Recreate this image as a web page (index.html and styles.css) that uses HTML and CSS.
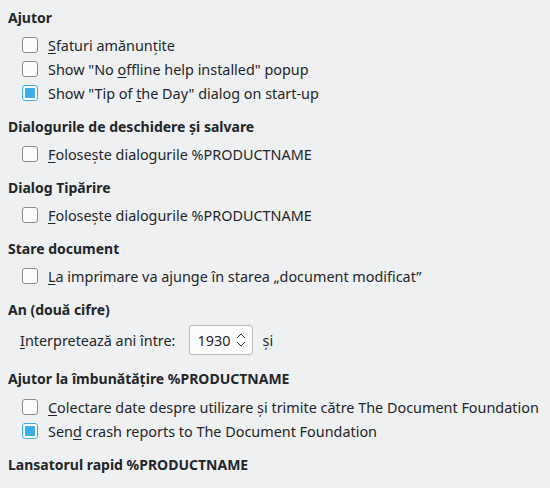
FILE: index.html
```html
<!DOCTYPE html>
<html lang="ro">
<head>
<meta charset="utf-8">
<link rel="stylesheet" href="styles.css">
</head>
<body>
<div class="page">
  <section class="sec first">
    <h2 class="head">Ajutor</h2>
    <div class="rows">
      <label class="row"><span class="cb"></span><span><u>S</u>faturi amănunțite</span></label>
      <label class="row"><span class="cb"></span><span>Show "No <u>o</u>ffline help installed" popup</span></label>
      <label class="row"><span class="cb on"></span><span>Show "Tip of <u>t</u>he Day" dialog on start-up</span></label>
    </div>
  </section>
  <section class="sec">
    <h2 class="head">Dialogurile de deschidere și salvare</h2>
    <div class="rows">
      <label class="row"><span class="cb"></span><span><u>F</u>olosește dialogurile %PRODUCTNAME</span></label>
    </div>
  </section>
  <section class="sec">
    <h2 class="head">Dialog Tipărire</h2>
    <div class="rows">
      <label class="row"><span class="cb"></span><span><u>F</u>olosește dialogurile %PRODUCTNAME</span></label>
    </div>
  </section>
  <section class="sec">
    <h2 class="head">Stare document</h2>
    <div class="rows">
      <label class="row"><span class="cb"></span><span><u>L</u>a imprimare va ajunge în starea „document modificat”</span></label>
    </div>
  </section>
  <section class="sec">
    <h2 class="head">An (două cifre)</h2>
    <div class="rows">
      <div class="spinrow">
        <span class="spinlabel"><u>I</u>nterpretează ani între:</span>
        <span class="spin"><span class="val">1930</span>
          <svg class="arrows" width="10" height="18" viewBox="0 0 10 18"><path d="M1 7 L5 3 L9 7 M1 11 L5 15 L9 11" fill="none" stroke="#232629" stroke-width="1"/></svg>
        </span>
        <span class="spinafter">și</span>
      </div>
    </div>
  </section>
  <section class="sec after-spin">
    <h2 class="head">Ajutor la îmbunătățire %PRODUCTNAME</h2>
    <div class="rows">
      <label class="row"><span class="cb"></span><span><u>C</u>olectare date despre utilizare și trimite către The Document Foundation</span></label>
      <label class="row"><span class="cb on"></span><span>Sen<u>d</u> crash reports to The Document Foundation</span></label>
    </div>
  </section>
  <section class="sec">
    <h2 class="head">Lansatorul rapid %PRODUCTNAME</h2>
  </section>
</div>
</body>
</html>
```

FILE: styles.css
```css
html, body {
  margin: 0;
  padding: 0;
  background: #eff0f1;
}
body {
  font-family: "Noto Sans", "Open Sans", sans-serif;
  font-size: 14.4px;
  color: #232629;
  width: 550px;
  height: 488px;
  overflow: hidden;
}
.page {
  padding: 8px 0 0 8px;
  display: flex;
  flex-direction: column;
  gap: 12px;
}
.sec {
  display: flex;
  flex-direction: column;
  gap: 5px;
}
.sec.after-spin {
  margin-top: 2px;
  gap: 6px;
}
.head {
  margin: 0;
  font-size: 14px;
  font-weight: 700;
  line-height: 20px;
  height: 20px;
}
.rows {
  display: flex;
  flex-direction: column;
  padding-left: 14px;
}
.row {
  display: flex;
  align-items: center;
  gap: 10px;
  height: 24px;
  white-space: nowrap;
}
u {
  text-decoration: underline;
  text-underline-offset: 2px;
}
.cb {
  width: 16px;
  height: 16px;
  box-sizing: border-box;
  border: 1px solid #898b8d;
  border-radius: 3px;
  background: #fcfcfc;
  display: flex;
  align-items: center;
  justify-content: center;
  flex: none;
}
.cb.on {
  border-color: #3daee9;
}
.cb.on::after {
  content: "";
  width: 10px;
  height: 10px;
  background: #3daee9;
  border-radius: 1px;
}
.spinrow {
  display: flex;
  align-items: center;
  height: 30px;
  margin-left: -2px;
}
.spinlabel {
  margin-right: 14px;
}
.spinafter {
  margin-left: 9px;
}
.spin {
  display: flex;
  align-items: center;
  justify-content: space-between;
  box-sizing: border-box;
  width: 64px;
  height: 30px;
  padding: 0 6px 0 7px;
  background: #fcfcfc;
  border: 1px solid #bcbebf;
  border-radius: 3px;
}
.arrows {
  display: block;
}
```
